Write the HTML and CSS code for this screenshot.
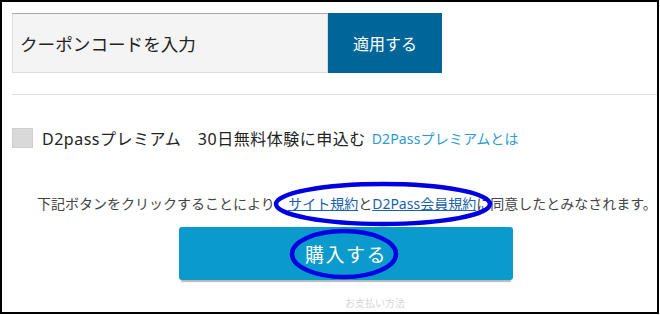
FILE: index.html
```html
<!DOCTYPE html>
<html lang="ja">
<head>
<meta charset="utf-8">
<link rel="stylesheet" href="styles.css">
</head>
<body>
<div class="frame">
  <div class="content">
    <div class="coupon">
      <div class="coupon-input">クーポンコードを入力</div>
      <div class="coupon-apply">適用する</div>
    </div>
    <div class="divider"></div>
    <div class="premium">
      <span class="checkbox"></span>
      <span class="premium-text">D2passプレミアム　30日無料体験に申込む</span>
      <a class="premium-link">D2Passプレミアムとは</a>
    </div>
    <p class="notice">下記ボタンをクリックすることにより、<a class="terms">サイト規約</a>と<a class="terms">D2Pass会員規約</a>に同意したとみなされます。</p>
    <div class="buy-row">
      <div class="buy">購入する</div>
    </div>
    <div class="faint">お支払い方法</div>
  </div>
</div>
<svg class="marks" width="660" height="315" viewBox="0 0 660 315">
  <ellipse cx="383" cy="204" rx="107" ry="20" fill="none" stroke="#0000e0" stroke-width="4.5"/>
  <ellipse cx="344" cy="254" rx="52" ry="23" fill="none" stroke="#0000e0" stroke-width="4.5"/>
</svg>
</body>
</html>
```

FILE: styles.css
```css
* { box-sizing: border-box; }
html, body { margin: 0; padding: 0; background: #fff; }
body {
  position: relative;
  width: 660px;
  height: 315px;
  font-family: "Noto Sans", "Noto Sans CJK JP", sans-serif;
  color: #222;
}
.frame {
  width: 659px;
  height: 314px;
  border: 2px solid #000;
  overflow: hidden;
}
.content {
  padding-left: 10px;
}
.coupon {
  display: flex;
  margin-top: 11px;
  height: 60px;
}
.coupon-input {
  width: 316px;
  background: #f4f4f4;
  border: 1px solid #dcdcdc;
  border-top-color: #a8a8a8;
  display: flex;
  align-items: center;
  padding-left: 7px;
  font-size: 17.6px;
  color: #222;
}
.coupon-apply {
  width: 114px;
  background: #006699;
  color: #fff;
  font-size: 16px;
  display: flex;
  align-items: center;
  justify-content: center;
}
.divider {
  margin-top: 21px;
  height: 1px;
  background: #e2e2e2;
}
.premium {
  display: flex;
  align-items: center;
  margin-top: 33px;
  height: 20px;
}
.checkbox {
  width: 21px;
  height: 20px;
  background: #d9d9d9;
  border: 1px solid #cfcfcf;
  margin-right: 9px;
}
.premium-text {
  font-size: 16px;
  letter-spacing: 0.5px;
  color: #222;
}
.premium-link {
  font-size: 14px;
  letter-spacing: 0.15px;
  color: #2b9bd1;
  margin-left: 6px;
}
.notice {
  margin: 46px 0 0 25px;
  font-size: 14px;
  line-height: 20px;
  color: #444;
  white-space: nowrap;
}
.terms {
  color: #1a5fab;
  text-decoration: underline;
}
.buy-row {
  display: flex;
  margin-top: 13px;
  padding-left: 167px;
}
.buy {
  width: 334px;
  height: 53px;
  background: #0a9bcc;
  border-radius: 3px;
  box-shadow: 0 4px 1px -2px #b8b8b8;
  color: #fff;
  font-size: 19px;
  letter-spacing: 1.5px;
  display: flex;
  align-items: center;
  justify-content: center;
}
.faint {
  margin: 17px 0 0 333px;
  font-size: 10px;
  line-height: 12px;
  color: #d6d6d6;
}
.marks {
  position: absolute;
  top: 0;
  left: 0;
  pointer-events: none;
}
```
